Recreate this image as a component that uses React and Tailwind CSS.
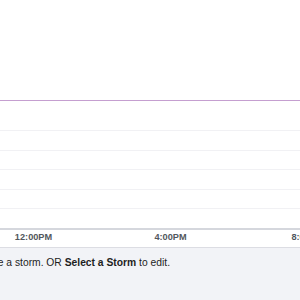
export default function App() {
  const grid = [0, 1, 2, 3, 4];
  return (
    <div className="w-[300px] h-[300px] overflow-hidden bg-white flex flex-col" style={{ fontFamily: '"Liberation Sans", Arial, sans-serif' }}>
      <div className="h-[100px] shrink-0 bg-white" />
      <div className="h-[1px] shrink-0 bg-[#c59fd0]" />
      <div className="h-[29px] shrink-0" />
      <div className="flex flex-col shrink-0">
        {grid.map((g) => (
          <div key={g} className="h-[19.5px] shrink-0 border-t border-[#f1f1f4]" />
        ))}
      </div>
      <div className="h-[2px] shrink-0 bg-[#d5d7dd]" />
      <div className="h-[17px] shrink-0 flex items-center -ml-[35px] whitespace-nowrap">
        {['12:00PM', '4:00PM', '8:00PM'].map((t) => (
          <div key={t} className="w-[137px] shrink-0 text-center text-[9.2px] font-bold text-[#52575d]">{t}</div>
        ))}
      </div>
      <div className="flex-1 bg-[#f2f3f7] border-t border-[#dcdde3] flex items-start pt-[7px]">
        <div className="w-[170px] shrink-0 flex justify-end whitespace-nowrap text-[10.3px] text-[#1e1e1e]">
          <span>Click on the chart to create a storm. OR <span className="font-bold">Select a Storm</span> to edit.</span>
        </div>
      </div>
    </div>
  );
}
